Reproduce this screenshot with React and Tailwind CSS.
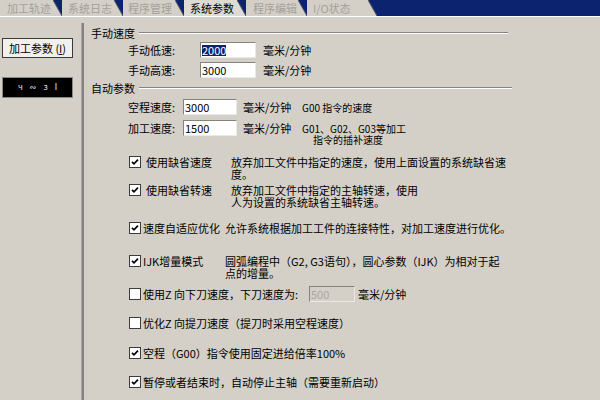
import React from "react";

const tabs = [
  { label: "加工轨迹", w: "w-[62px]", pl: "pl-[7px]" },
  { label: "系统日志", w: "w-[61px]", pl: "pl-[6px]" },
  { label: "程序管理", w: "w-[61px]", pl: "pl-[5px]" },
  { label: "系统参数", w: "w-[62px]", pl: "pl-[6px]", active: true },
  { label: "程序编辑", w: "w-[61px]", pl: "pl-[7px]" },
  { label: "I/O状态", w: "w-[70px]", pl: "pl-[6px]" },
];

function Tab({ t }) {
  return (
    <div
      className={`relative h-[16px] shrink-0 ${t.w} ${t.pl} text-[11px] leading-[17px] ${
        t.active ? "bg-[#dedbd5] text-black" : "bg-[#d4d0c8] text-[#a4a09a]"
      }`}
    >
      {t.label}
      <svg className="absolute right-0 top-0" width="9" height="16" viewBox="0 0 9 16">
        <polygon points="0,0 9,0 9,16" fill="#0c2470" />
        <line x1="0" y1="0" x2="9" y2="16" stroke="#5a5a5a" strokeWidth="1" />
      </svg>
    </div>
  );
}

function Check({ on }) {
  return (
    <div className="w-[12px] h-[12px] shrink-0 border border-[#3c3c3c] bg-white flex items-center justify-center">
      {on && (
        <svg width="8" height="8" viewBox="0 0 8 8">
          <path d="M1 3.8 L3 5.8 L7 1.6" fill="none" stroke="#000" strokeWidth="1.7" />
        </svg>
      )}
    </div>
  );
}

function Field({ w, children, disabled }) {
  return (
    <div
      className={`${w} h-[16px] flex items-center pl-[1px] border border-[#85827e] border-b-[#ebe9e5] border-r-[#ebe9e5] text-[11px] ${
        disabled ? "bg-[#d4d0c8] text-[#aaa7a0]" : "bg-white text-black"
      }`}
    >
      {children}
    </div>
  );
}

function GroupTitle({ title, w, mt }) {
  return (
    <div className={`flex items-center h-[12px] ${w} ${mt}`}>
      <span className="text-[11px] leading-[12px]">{title}</span>
      <div className="flex-1 ml-[4px] h-[2px] border-t border-[#868380] border-b border-b-white" />
    </div>
  );
}

export default function App() {
  return (
    <div className="w-[600px] h-[400px] overflow-hidden bg-[#d4d0c8] text-black flex flex-col font-['Noto_Sans_CJK_SC','Noto_Sans',sans-serif]">
      {/* Tabs */}
      <div className="h-[16px] flex bg-[#0c2470]">
        {tabs.map((t) => (
          <Tab key={t.label} t={t} />
        ))}
      </div>

      <div className="flex flex-1 border-t border-white">
        {/* Left column */}
        <div className="w-[81px] shrink-0">
          <div className="mt-[21px] ml-[2px] w-[71px] h-[20px] border border-[#3a3a3a] bg-[#f1f0ec] flex items-center justify-center text-[11px]">
            加工参数 (<span className="underline">I</span>)
          </div>
          <div className="mt-[19px] ml-[2px] w-[71px] h-[21px] border border-[#8a8884] bg-black flex items-center justify-center gap-[7px] text-[8px] text-[#e8e8e8] font-['DejaVu_Sans',sans-serif]">
            <span>ч</span>
            <span>∾</span>
            <span>з</span>
            <span>I</span>
          </div>
        </div>
        <div className="mt-[6px] flex shrink-0">
          <div className="w-[1px] bg-[#a9a5a1]" />
          <div className="w-[2px] bg-[#858280]" />
        </div>

        {/* Right panel */}
        <div className="flex-1 pl-[7px] text-[11px]">
          <GroupTitle title="手动速度" w="w-[417px]" mt="mt-[10px]" />

          <div className="mt-[3px] h-[16px] flex items-center pl-[37px]">
            <span className="w-[72px]">手动低速:</span>
            <Field w="w-[56px]">
              <span className="bg-[#0a246a] text-white leading-[11px]">2000</span>
            </Field>
            <span className="ml-[7px]">毫米/分钟</span>
          </div>
          <div className="mt-[4px] h-[16px] flex items-center pl-[37px]">
            <span className="w-[72px]">手动高速:</span>
            <Field w="w-[56px]">3000</Field>
            <span className="ml-[7px]">毫米/分钟</span>
          </div>

          <GroupTitle title="自动参数" w="w-[421px]" mt="mt-[4px]" />

          <div className="mt-[5px] h-[16px] flex items-center pl-[37px]">
            <span className="w-[55px]">空程速度:</span>
            <Field w="w-[54px]">3000</Field>
            <span className="ml-[6px] w-[59px]">毫米/分钟</span>
            <span className="text-[10px]">G00 指令的速度</span>
          </div>
          <div className="mt-[5px] h-[24px] flex items-start pl-[37px]">
            <span className="w-[55px] leading-[16px]">加工速度:</span>
            <Field w="w-[54px]">1500</Field>
            <span className="ml-[6px] w-[59px] leading-[16px]">毫米/分钟</span>
            <div className="mt-[3px] text-[10px] leading-[11px]">
              <div>G01、G02、G03等加工</div>
              <div className="pl-[11px]">指令的插补速度</div>
            </div>
          </div>

          {/* Options */}
          <div className="pl-[38px] leading-[12px]">
            <div className="mt-[12px] flex items-start">
              <Check on />
              <span className="ml-[5px] w-[85px]">使用缺省速度</span>
              <div>
                <div>放弃加工文件中指定的速度，使用上面设置的系统缺省速</div>
                <div>度。</div>
              </div>
            </div>
            <div className="mt-[4px] flex items-start">
              <Check on />
              <span className="ml-[5px] w-[85px]">使用缺省转速</span>
              <div>
                <div>放弃加工文件中指定的主轴转速，使用</div>
                <div>人为设置的系统缺省主轴转速。</div>
              </div>
            </div>
            <div className="mt-[14px] flex items-start">
              <Check on />
              <span className="ml-[2px] w-[82px]">速度自适应优化</span>
              <div>允许系统根据加工工件的连接特性，对加工速度进行优化。</div>
            </div>
            <div className="mt-[21px] flex items-start">
              <Check on />
              <span className="ml-[2px] w-[82px]">IJK增量模式</span>
              <div>
                <div>圆弧编程中（G2, G3语句），圆心参数（IJK）为相对于起</div>
                <div>点的增量。</div>
              </div>
            </div>
            <div className="mt-[7px] h-[16px] flex items-center">
              <Check />
              <span className="ml-[2px] w-[166px]">使用Z 向下刀速度，下刀速度为:</span>
              <Field w="w-[46px]" disabled>
                500
              </Field>
              <span className="ml-[3px]">毫米/分钟</span>
            </div>
            <div className="mt-[15px] flex items-start">
              <Check />
              <span className="ml-[2px]">优化Z 向提刀速度（提刀时采用空程速度）</span>
            </div>
            <div className="mt-[18px] flex items-start">
              <Check on />
              <span className="ml-[2px]">空程（G00）指令使用固定进给倍率100%</span>
            </div>
            <div className="mt-[17px] flex items-start">
              <Check on />
              <span className="ml-[2px]">暂停或者结束时，自动停止主轴（需要重新启动）</span>
            </div>
          </div>
        </div>
      </div>
    </div>
  );
}
